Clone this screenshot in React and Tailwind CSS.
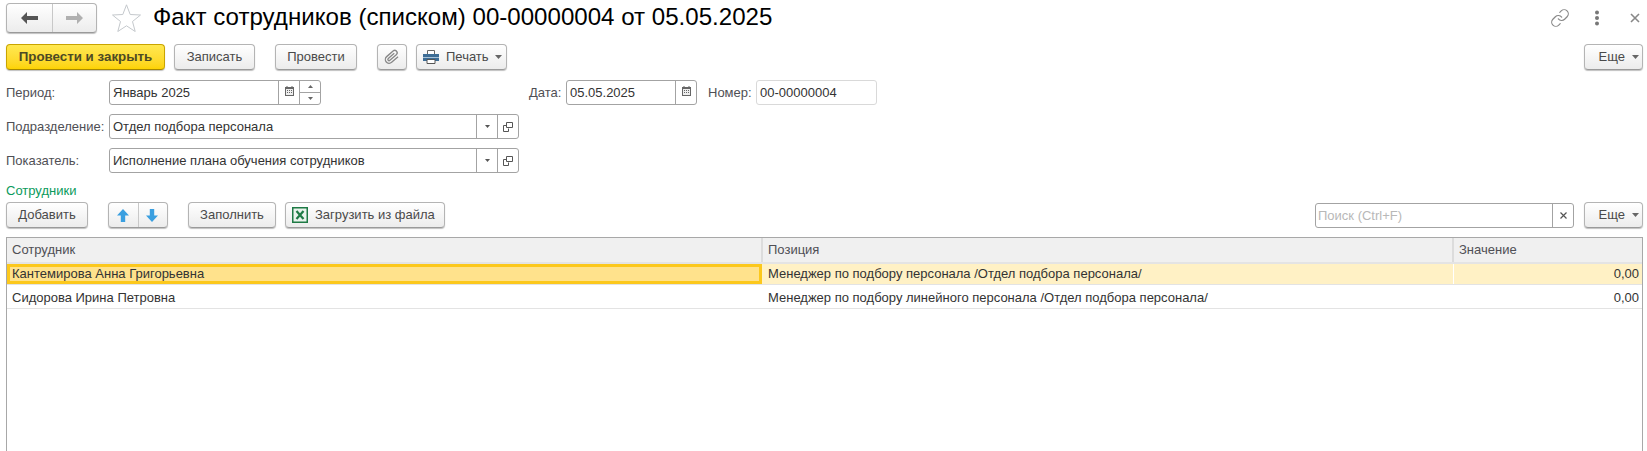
import { Link } from "lucide-react";

function Btn({ className = "", children }) {
  return (
    <button className={`flex items-center justify-center h-[26px] rounded-[4px] border border-[#b4b4b4] border-b-[#9a9a9a] bg-gradient-to-b from-white to-[#ececec] shadow-[0_1px_1px_rgba(0,0,0,0.25)] text-[13px] text-[#4a4a4a] ${className}`}>
      {children}
    </button>
  );
}

function Caret({ small }) {
  return small ? (
    <svg width="5" height="3" viewBox="0 0 5 3" className="shrink-0">
      <path d="M0 0h5L2.5 3z" fill="#555" />
    </svg>
  ) : (
    <svg width="7" height="4" viewBox="0 0 7 4" className="shrink-0">
      <path d="M0 0h7L3.5 4z" fill="#666" />
    </svg>
  );
}

function CalendarIcon() {
  return (
    <svg width="9" height="10" viewBox="0 0 9 10" className="-mt-[3px]">
      <path d="M1.5 0h1v2h-1zM6.5 0h1v2h-1z" fill="#666" />
      <path d="M0 1h9v9H0z" fill="#666" />
      <path d="M1 3h7v6H1z" fill="#eee" />
      <path d="M2 4h1v1H2zM4 4h1v1H4zM6 4h1v1H6zM2 6h1v1H2zM4 6h1v1H4zM6 6h1v1H6z" fill="#666" />
    </svg>
  );
}

function OpenIcon() {
  return (
    <svg width="10" height="10" viewBox="0 0 10 10" fill="none" stroke="#555">
      <path d="M3.5 .5h6v5h-6z" />
      <path d="M3.5 3.5h-3v6h5v-3" />
    </svg>
  );
}

function Label({ className = "", children }) {
  return <span className={`text-[13px] text-[#4f4f55] whitespace-nowrap ${className}`}>{children}</span>;
}

function Field({ className = "", value, children }) {
  return (
    <div className={`flex h-[25px] rounded-[3px] border border-[#a3a3a3] bg-white text-[13px] text-[#333] ${className}`}>
      <div className="flex-1 flex items-center pl-[3px] whitespace-nowrap overflow-hidden">{value}</div>
      {children}
    </div>
  );
}

function Seg({ className = "", children }) {
  return <div className={`flex items-center justify-center border-l border-[#a3a3a3] ${className}`}>{children}</div>;
}

function SelectField({ value }) {
  return (
    <Field className="w-[410px]" value={value}>
      <Seg className="w-[21px]"><Caret small /></Seg>
      <Seg className="w-[21px]"><OpenIcon /></Seg>
    </Field>
  );
}

function Cell({ className = "", children }) {
  return <div className={`flex items-center px-[5px] text-[13px] whitespace-nowrap ${className}`}>{children}</div>;
}

export default function App() {
  return (
    <div className="h-[451px] w-[1647px] overflow-hidden bg-white flex flex-col pl-[6px] pr-[4px] pt-[3px] font-['Liberation_Sans',Arial,sans-serif]">
      {/* Title */}
      <div className="flex items-center h-[30px]">
        <div className="flex w-[91px] h-[30px] rounded-[4px] border border-[#b4b4b4] border-b-[#9a9a9a] bg-gradient-to-b from-white to-[#ececec] shadow-[0_1px_1px_rgba(0,0,0,0.25)]">
          <div className="w-[46px] flex items-center justify-center border-r border-[#c8c8c8]">
            <svg width="17" height="12" viewBox="0 0 17 12"><path d="M6 0v4h11v4H6v4L0 6z" fill="#555" /></svg>
          </div>
          <div className="flex-1 flex items-center justify-center">
            <svg width="17" height="12" viewBox="0 0 17 12"><path d="M11 0v4H0v4h11v4l6-6z" fill="#b0b0b0" /></svg>
          </div>
        </div>
        <svg width="29" height="28" viewBox="0 0 29 28" className="ml-[15px] shrink-0">
          <path d="M14.5 .8l3.7 9.7 10.3.5-8 6.5 2.7 10-8.7-5.7-8.7 5.7 2.7-10-8-6.5 10.3-.5z" fill="#fff" stroke="#c4c8cc" />
        </svg>
        <h1 className="ml-[12px] -mt-[2px] text-[24.1px] leading-[26px] text-black whitespace-nowrap">Факт сотрудников (списком) 00-00000004 от 05.05.2025</h1>
        <div className="ml-auto flex items-center">
          <Link size={20} strokeWidth={1.4} className="text-[#888]" />
          <svg width="6" height="16" viewBox="0 0 6 16" className="ml-[24px]" fill="#777">
            <circle cx="3" cy="2.5" r="2" /><circle cx="3" cy="8" r="2" /><circle cx="3" cy="13.5" r="2" />
          </svg>
          <svg width="10" height="10" viewBox="0 0 10 10" className="ml-[30px] mr-[3px]" stroke="#888" strokeWidth="1.6">
            <path d="M1 1l8 8M9 1l-8 8" />
          </svg>
        </div>
      </div>

      {/* Command bar */}
      <div className="flex mt-[11px]">
        <button className="w-[159px] h-[26px] rounded-[4px] border border-[#c9a400] border-b-[#a88900] bg-gradient-to-b from-[#ffe84f] to-[#fdd300] shadow-[0_1px_1px_rgba(0,0,0,0.25)] text-[13.33px] font-bold text-[#4d4a24]">Провести и закрыть</button>
        <Btn className="w-[81px] ml-[9px]">Записать</Btn>
        <Btn className="w-[82px] ml-[20px]">Провести</Btn>
        <Btn className="w-[30px] ml-[20px]">
          <svg width="16" height="16" viewBox="0 0 24 24" fill="none" stroke="#888" strokeWidth="2" className="rotate-[4deg]">
            <path d="M21 11l-9 9a5.5 5.5 0 0 1-8-8l9-9a3.6 3.6 0 0 1 5.2 5.2l-9 9a1.8 1.8 0 0 1-2.6-2.6l8.4-8.3" />
          </svg>
        </Btn>
        <Btn className="w-[91px] ml-[9px] !justify-start pl-[6px]">
          <svg width="16" height="14" viewBox="0 0 16 14" className="shrink-0">
            <path d="M4.5 .5h7v4h-7z" fill="#fff" stroke="#666" />
            <path d="M0 4h16v7H0z" fill="#3d6d96" />
            <path d="M0 7h16v1H0z" fill="#a9c3d8" />
            <path d="M4 9.5h8v4H4z" fill="#fff" stroke="#555" />
          </svg>
          <span className="ml-[7px]">Печать</span>
          <span className="ml-[6px]"><Caret /></span>
        </Btn>
        <Btn className="w-[59px] ml-auto !justify-end pr-[3px] gap-[7px]">Еще <Caret /></Btn>
      </div>

      {/* Fields */}
      <div className="flex items-center mt-[10px]">
        <Label className="w-[103px]">Период:</Label>
        <Field className="w-[212px]" value="Январь 2025">
          <Seg className="w-[21px]"><CalendarIcon /></Seg>
          <div className="w-[21px] flex flex-col border-l border-[#a3a3a3]">
            <div className="flex-1 flex items-center justify-center border-b border-[#a3a3a3]">
              <svg width="5" height="3" viewBox="0 0 5 3"><path d="M0 3h5L2.5 0z" fill="#666" /></svg>
            </div>
            <div className="flex-1 flex items-center justify-center">
              <svg width="5" height="3" viewBox="0 0 5 3"><path d="M0 0h5L2.5 3z" fill="#666" /></svg>
            </div>
          </div>
        </Field>
        <Label className="ml-[208px] w-[37px]">Дата:</Label>
        <Field className="w-[131px]" value="05.05.2025">
          <Seg className="w-[21px]"><CalendarIcon /></Seg>
        </Field>
        <Label className="ml-[11px] w-[48px]">Номер:</Label>
        <Field className="w-[121px] !border-[#d9d9d9]" value="00-00000004" />
      </div>
      <div className="flex items-center mt-[9px]">
        <Label className="w-[103px]">Подразделение:</Label>
        <SelectField value="Отдел подбора персонала" />
      </div>
      <div className="flex items-center mt-[9px]">
        <Label className="w-[103px]">Показатель:</Label>
        <SelectField value="Исполнение плана обучения сотрудников" />
      </div>

      <div className="mt-[10px] h-[16px] leading-[16px] text-[13px] text-[#0a9a5c]">Сотрудники</div>

      {/* Table command bar */}
      <div className="flex mt-[3px]">
        <Btn className="w-[82px]">Добавить</Btn>
        <div className="flex w-[60px] ml-[20px] h-[26px] rounded-[4px] border border-[#b4b4b4] border-b-[#9a9a9a] bg-gradient-to-b from-white to-[#ececec] shadow-[0_1px_1px_rgba(0,0,0,0.25)]">
          <div className="w-[30px] flex items-center justify-center pr-[2px] border-r border-[#c8c8c8]">
            <svg width="12" height="13" viewBox="0 0 12 13"><path d="M6 0L12 6.5H8.2V13H3.8V6.5H0z" fill="#3a9fe0" /></svg>
          </div>
          <div className="flex-1 flex items-center justify-center pr-[2px]">
            <svg width="12" height="13" viewBox="0 0 12 13"><path d="M6 13L12 6.5H8.2V0H3.8v6.5H0z" fill="#3a9fe0" /></svg>
          </div>
        </div>
        <Btn className="w-[88px] ml-[20px]">Заполнить</Btn>
        <Btn className="w-[160px] ml-[9px] !justify-start pl-[6px] gap-[7px]">
          <svg width="16" height="16" viewBox="0 0 16 16" className="shrink-0">
            <path d="M.75.75h14.5v14.5H.75z" fill="#e9f3ec" stroke="#1e7a45" strokeWidth="1.5" />
            <path d="M4.5 4l7 8M11.5 4l-7 8" stroke="#1e7a45" strokeWidth="2.2" />
          </svg>
          <span>Загрузить из файла</span>
        </Btn>
        <div className="ml-auto flex h-[25px] mt-px w-[259px] rounded-[3px] border border-[#a3a3a3] bg-white text-[13px] text-[#b8b8b8]">
          <div className="flex-1 flex items-center pl-[2px]">Поиск (Ctrl+F)</div>
          <Seg className="w-[21px]">
            <svg width="7" height="7" viewBox="0 0 7 7" stroke="#555" strokeWidth="1.2"><path d="M.5.5l6 6M6.5.5l-6 6" /></svg>
          </Seg>
        </div>
        <Btn className="w-[59px] ml-[10px] !justify-end pr-[3px] gap-[7px]">Еще <Caret /></Btn>
      </div>

      {/* Table */}
      <div className="flex-1 mt-[9px] border border-b-0 border-[#a8a8a8] flex flex-col">
        <div className="flex h-[26px] bg-[#f0f0f0] border-b-2 border-[#e4e4e4] text-[#4f4f55]">
          <Cell className="w-[756px] border-r-2 border-[#dcdcdc]">Сотрудник</Cell>
          <Cell className="w-[691px] border-r-2 border-[#dcdcdc]">Позиция</Cell>
          <Cell className="flex-1">Значение</Cell>
        </div>
        <div className="flex h-[21px] bg-[#fff1c5] border-b border-[#e3e3e3] text-[#333]">
          <Cell className="w-[755px] bg-[#ffe28c] border-[3px] border-[#fcc81c] !px-[2px]">Кантемирова Анна Григорьевна</Cell>
          <Cell className="w-[692px] !pl-[6px] border-r border-white">Менеджер по подбору персонала /Отдел подбора персонала/</Cell>
          <Cell className="flex-1 justify-end !pr-[3px]">0,00</Cell>
        </div>
        <div className="flex h-[24px] pt-[2px] border-b border-[#e3e3e3] text-[#333]">
          <Cell className="w-[755px]">Сидорова Ирина Петровна</Cell>
          <Cell className="w-[692px] !pl-[6px]">Менеджер по подбору линейного персонала /Отдел подбора персонала/</Cell>
          <Cell className="flex-1 justify-end !pr-[3px]">0,00</Cell>
        </div>
      </div>
    </div>
  );
}
